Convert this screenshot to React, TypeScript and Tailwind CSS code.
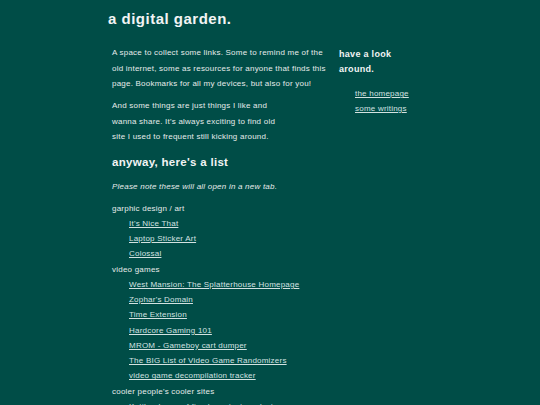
import React from "react";

const groups: { name: string; links: string[] }[] = [
  { name: "garphic design / art", links: ["It's Nice That", "Laptop Sticker Art", "Colossal"] },
  {
    name: "video games",
    links: [
      "West Mansion: The Splatterhouse Homepage",
      "Zophar's Domain",
      "Time Extension",
      "Hardcore Gaming 101",
      "MROM - Gameboy cart dumper",
      "The BIG List of Video Game Randomizers",
      "video game decompilation tracker",
    ],
  },
  {
    name: "cooler people's cooler sites",
    links: ["Kettle - home of fine hypertext products", "Neocities", "Sadgrl Online"],
  },
];

export default function App() {
  return (
    <div
      className="min-h-[405px] w-full bg-[#004d47] text-[#e6ebea]"
      style={{ fontFamily: '"Liberation Sans", Arial, sans-serif' }}
    >
      <div className="ml-[108px] pt-[9px]">
        <h1 className="text-[15px] font-bold leading-[20px] tracking-[0.5px] text-[#f2f4f4]">
          a digital garden.
        </h1>
        <div className="mt-[16px] flex">
          <main className="w-[231px] pl-[4px] pr-[9px] text-[8px] tracking-[0.22px]">
            <p className="leading-[15.5px]">
              A space to collect some links. Some to remind me of the old internet, some as resources for anyone that
              finds this page. Bookmarks for all my devices, but also for you!
            </p>
            <p className="mt-[6.5px] leading-[15.5px]">
              And some things are just things I like and
              <br />
              wanna share. It's always exciting to find old
              <br />
              site I used to frequent still kicking around.
            </p>
            <h2 className="mt-[9px] text-[11.5px] font-bold leading-[16px] tracking-[0.3px] text-[#f2f4f4]">
              anyway, here's a list
            </h2>
            <p className="mt-[9px] italic leading-[15.5px]">Please note these will all open in a new tab.</p>
            <ul className="mt-[6.5px] leading-[15.25px]">
              {groups.map((g) => (
                <li key={g.name}>
                  <div>{g.name}</div>
                  <ul className="pl-[17px]">
                    {g.links.map((l) => (
                      <li key={l}>
                        <a href="#" className="text-[#d3e2e1] underline underline-offset-[1px]">
                          {l}
                        </a>
                      </li>
                    ))}
                  </ul>
                </li>
              ))}
            </ul>
          </main>
          <aside className="mt-[2px]">
            <h3 className="text-[9px] font-bold leading-[15px] tracking-[0.3px] text-[#f2f4f4]">
              have a look
              <br />
              around.
            </h3>
            <ul className="mt-[9px] pl-[16px] text-[8px] leading-[15px] tracking-[0.22px]">
              <li>
                <a href="#" className="text-[#d3e2e1] underline underline-offset-[1px]">
                  the homepage
                </a>
              </li>
              <li>
                <a href="#" className="text-[#d3e2e1] underline underline-offset-[1px]">
                  some writings
                </a>
              </li>
            </ul>
          </aside>
        </div>
      </div>
    </div>
  );
}
